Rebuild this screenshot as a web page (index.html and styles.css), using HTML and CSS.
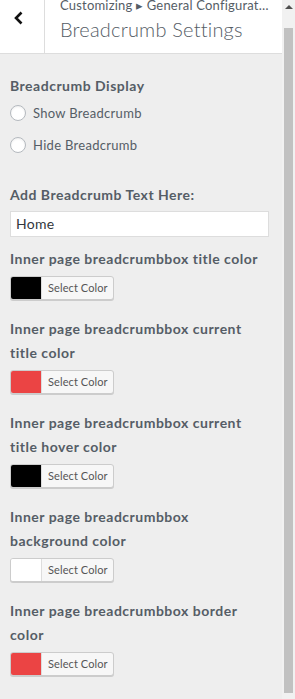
FILE: index.html
```html
<!DOCTYPE html>
<html>
<head>
<meta charset="utf-8">
<link rel="stylesheet" href="styles.css">
</head>
<body>
<div class="frame">
  <div class="panel">
    <header class="head">
      <div class="back">
        <svg width="12" height="14" viewBox="0 0 12 14"><path d="M8.5 1.5 L3 7 L8.5 12.5" fill="none" stroke="#111" stroke-width="2.6"/></svg>
      </div>
      <div class="titles">
        <div class="crumb">Customizing ▸ General Configurat…</div>
        <div class="title">Breadcrumb Settings</div>
      </div>
    </header>
    <main class="content">
      <div class="label first">Breadcrumb Display</div>
      <label class="radio"><span class="circle"></span>Show Breadcrumb</label>
      <label class="radio"><span class="circle"></span>Hide Breadcrumb</label>

      <div class="label text-label">Add Breadcrumb Text Here:</div>
      <div class="input">Home</div>

      <div class="label after-input">Inner page breadcrumbbox title color</div>
      <div class="color-btn"><span class="swatch black"></span><span class="btn-text">Select Color</span></div>

      <div class="label">Inner page breadcrumbbox current title color</div>
      <div class="color-btn"><span class="swatch red"></span><span class="btn-text">Select Color</span></div>

      <div class="label">Inner page breadcrumbbox current title hover color</div>
      <div class="color-btn"><span class="swatch black"></span><span class="btn-text">Select Color</span></div>

      <div class="label">Inner page breadcrumbbox background color</div>
      <div class="color-btn"><span class="swatch white"></span><span class="btn-text">Select Color</span></div>

      <div class="label">Inner page breadcrumbbox border color</div>
      <div class="color-btn"><span class="swatch red"></span><span class="btn-text">Select Color</span></div>
    </main>
  </div>
  <div class="scrollbar">
    <div class="arrow"></div>
    <div class="thumb"></div>
  </div>
</div>
</body>
</html>
```

FILE: styles.css
```css
html, body {
  margin: 0;
  padding: 0;
  height: 699px;
  overflow: hidden;
  background: #eeeeee;
}
body {
  font-family: Lato, "Open Sans", sans-serif;
  color: #555d66;
}
.frame {
  display: flex;
  height: 699px;
}
.panel {
  width: 282px;
  flex: none;
  background: #eeeeee;
  overflow: hidden;
}
.head {
  display: flex;
  height: 53px;
  background: #fff;
  border-bottom: 1px solid #dddddd;
}
.back {
  width: 45px;
  flex: none;
  border-right: 1px solid #dddddd;
  display: flex;
  justify-content: center;
  padding-top: 11px;
  box-sizing: border-box;
}
.back svg { margin-left: -6px; }
.titles {
  padding-left: 15px;
  overflow: hidden;
  white-space: nowrap;
}
.crumb {
  font-size: 13px;
  line-height: 16px;
  margin-top: -3px;
  letter-spacing: 0.2px;
  color: #555d66;
}
.title {
  font-size: 20px;
  font-weight: 300;
  line-height: 26px;
  margin-top: 3px;
  letter-spacing: 0.2px;
  color: #555d66;
}
.content {
  padding: 0 10px 0 10px;
  display: flex;
  flex-direction: column;
  align-items: flex-start;
}
.label {
  font-weight: 700;
  font-size: 14px;
  letter-spacing: 0.5px;
  line-height: 24px;
  margin-top: 17px;
  margin-bottom: 5px;
  width: 260px;
}
.label.first { margin-top: 20px; margin-bottom: 7px; }
.label.text-label { margin-top: 14px; margin-bottom: 4px; }
.label.after-input { margin-top: 10px; }
.radio {
  display: flex;
  align-items: center;
  font-size: 13px;
  letter-spacing: 0.3px;
  height: 16px;
  margin: 0 0 16px 0;
  color: #555d66;
}
.circle {
  width: 14px;
  height: 14px;
  border: 1px solid #b4b9be;
  border-radius: 50%;
  background: #fff;
  margin-right: 7px;
  box-shadow: inset 0 1px 2px rgba(0,0,0,0.07);
}
.input {
  box-sizing: border-box;
  width: 259px;
  height: 26px;
  background: #fff;
  border: 1px solid #dddddd;
  font-size: 14px;
  letter-spacing: 0.3px;
  line-height: 24px;
  padding-left: 5px;
  color: #32373c;
}
.color-btn {
  display: flex;
  height: 24px;
  box-sizing: border-box;
  border: 1px solid #cccccc;
  border-radius: 3px;
  overflow: hidden;
  background: #f7f7f7;
  box-shadow: 0 1px 0 #cccccc;
}
.swatch {
  width: 30px;
  height: 100%;
  border-right: 1px solid #dddddd;
}
.swatch.black { background: #000; }
.swatch.red { background: #eb4444; }
.swatch.white { background: #fff; }
.btn-text {
  font-size: 11px;
  letter-spacing: 0.1px;
  line-height: 22px;
  padding: 0 5px 0 6px;
  color: #555;
}
.scrollbar {
  flex: 1;
  background: #f1f1f1;
  position: relative;
}
.arrow {
  position: absolute;
  left: 3px;
  top: 5px;
  width: 0;
  height: 0;
  border-left: 4px solid transparent;
  border-right: 4px solid transparent;
  border-bottom: 4px solid #505050;
}
.thumb {
  position: absolute;
  left: 2px;
  right: 2px;
  top: 28px;
  height: 665px;
  background: #c1c1c1;
}
```
